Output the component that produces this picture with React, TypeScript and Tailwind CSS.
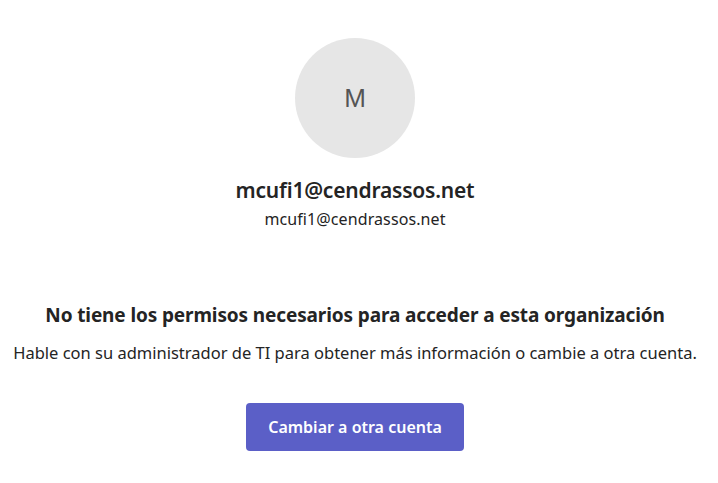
export default function App() {
  return (
    <div
      className="w-[710px] min-h-[483px] bg-white flex flex-col items-center text-[#242424]"
      style={{ fontFamily: '"Noto Sans", "Open Sans", sans-serif' }}
    >
      <div className="mt-[38px] w-[120px] h-[120px] rounded-full bg-[#e6e6e6] flex items-center justify-center">
        <span className="text-[26px] text-[#555555] leading-none" style={{ fontFamily: '"Liberation Sans", Arial, sans-serif' }}>
          M
        </span>
      </div>
      <div className="mt-[18px] text-[21px] font-semibold leading-[28px] tracking-[-0.2px]">mcufi1@cendrassos.net</div>
      <div className="mt-[4px] text-[16px] leading-[22px] tracking-[0.1px]">mcufi1@cendrassos.net</div>

      <h1 className="mt-[72px] text-[19px] font-bold leading-[26px] tracking-[-0.12px]">
        No tiene los permisos necesarios para acceder a esta organización
      </h1>
      <p className="mt-[14px] text-[16.5px] leading-[22px]">
        Hable con su administrador de TI para obtener más información o cambie a otra cuenta.
      </p>

      <button className="mt-[39px] w-[218px] h-[48px] rounded-[4px] bg-[#5b5fc7] text-white text-[16px] font-semibold">
        Cambiar a otra cuenta
      </button>
    </div>
  );
}
